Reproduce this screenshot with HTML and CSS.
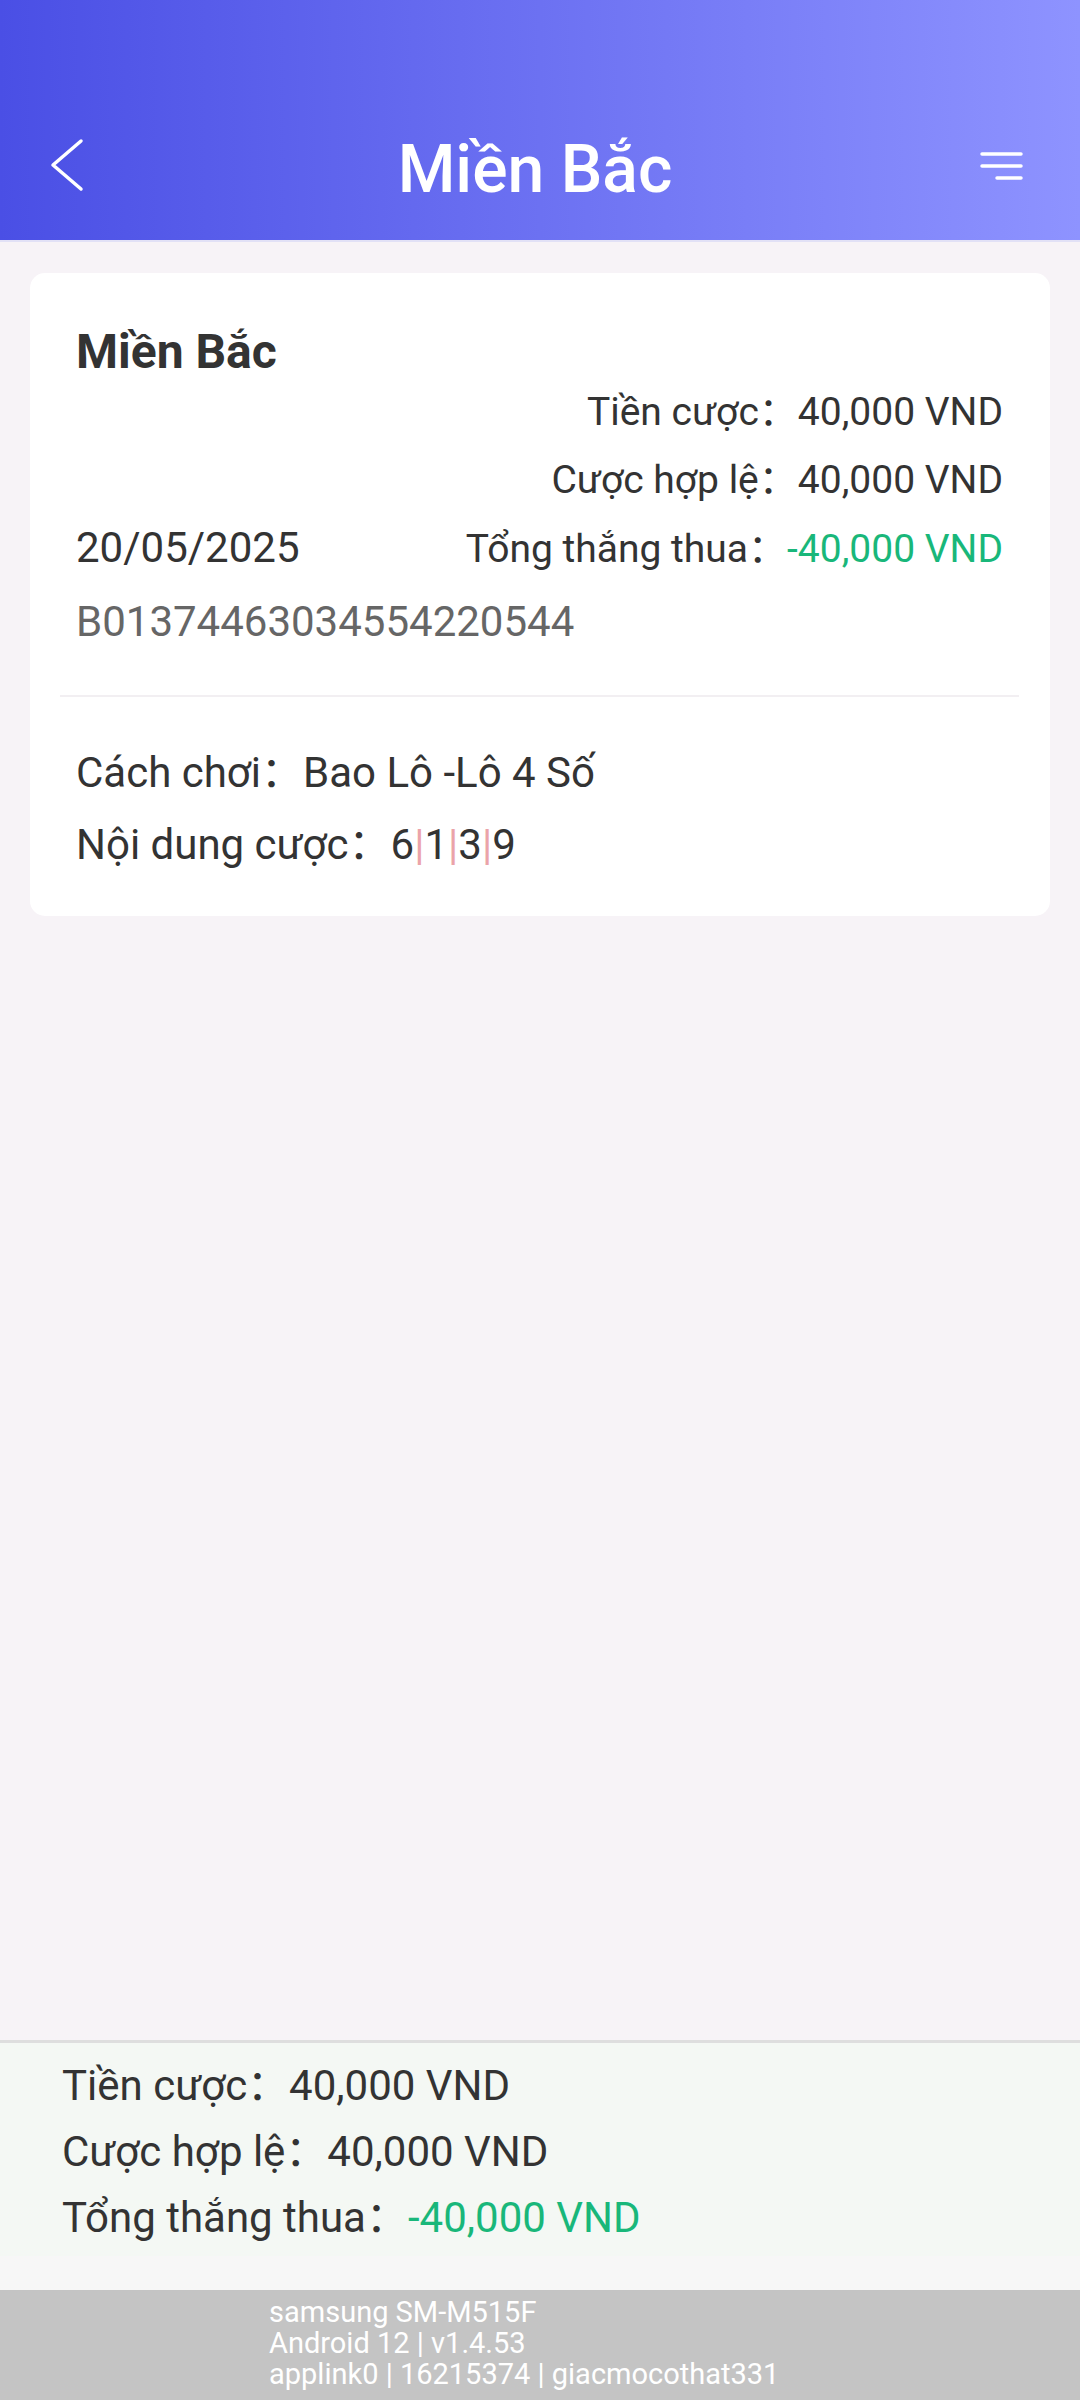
FILE: index.html
```html
<!DOCTYPE html>
<html lang="vi">
<head>
    <meta charset="UTF-8">
    <meta name="viewport" content="width=device-width, initial-scale=1.0">
    <title>Miền Bắc</title>
    <link rel="stylesheet" href="styles.css">
</head>
<body>
    <div class="page">
        <header class="topbar">
            <div class="topbar-row">
                <svg class="icon-back" width="60" height="60" viewBox="0 0 60 60">
                    <polyline points="51,6 23,30 51,54" fill="none" stroke="#fff" stroke-width="3.5" stroke-linecap="round" stroke-linejoin="round"/>
                </svg>
                <h1 class="title">Miền Bắc</h1>
                <svg class="icon-menu" width="80" height="60" viewBox="0 0 80 60">
                    <g stroke="#fff" stroke-width="3.5" stroke-linecap="round">
                        <line x1="22" y1="19" x2="61" y2="19"/>
                        <line x1="22" y1="31" x2="61" y2="31"/>
                        <line x1="37" y1="43" x2="61" y2="43"/>
                    </g>
                </svg>
            </div>
        </header>

        <main class="content">
            <div class="card">
                <div class="card-title">Miền Bắc</div>
                <div class="row right">
                    <span>Tiền cược：</span><span>40,000 VND</span>
                </div>
                <div class="row right">
                    <span>Cược hợp lệ：</span><span>40,000 VND</span>
                </div>
                <div class="row split">
                    <span class="date">20/05/2025</span>
                    <span>Tổng thắng thua：<span class="loss">-40,000 VND</span></span>
                </div>
                <div class="order-no">B01374463034554220544</div>
                <div class="divider"></div>
                <div class="line">Cách chơi：Bao Lô -Lô 4 Số</div>
                <div class="line">Nội dung cược：6<span class="pipe">|</span>1<span class="pipe">|</span>3<span class="pipe">|</span>9</div>
            </div>
        </main>

        <section class="summary">
            <div class="sum-row">Tiền cược：40,000 VND</div>
            <div class="sum-row">Cược hợp lệ：40,000 VND</div>
            <div class="sum-row">Tổng thắng thua：<span class="loss">-40,000 VND</span></div>
        </section>
        <div class="spacer"></div>

        <footer class="device">
            <div>samsung SM-M515F</div>
            <div>Android 12 | v1.4.53</div>
            <div>applink0 | 16215374 | giacmocothat331</div>
        </footer>
    </div>
</body>
</html>
```

FILE: styles.css
```css
* { box-sizing: border-box; }
body { margin: 0; font-family: Roboto, "Noto Sans CJK SC", sans-serif; color: #333; background: #f7f3f7; }
.page { width: 1080px; height: 2400px; display: flex; flex-direction: column; }

.topbar { height: 242px; padding-top: 130px; background: linear-gradient(90deg, #4a4fe5, #8e93ff); border-bottom: 2px solid #e2e1f6; }
.topbar-row { height: 80px; display: grid; grid-template-columns: 1fr auto 1fr; align-items: center; padding: 0 40px 0 30px; }
.icon-back, .icon-menu { margin-bottom: 10px; }
.icon-menu { justify-self: end; }
.title { margin: 0; font-size: 66px; line-height: 80px; font-weight: 500; color: #fff; }

.content { flex: 1; padding: 31px 30px 0; }
.card { background: #fff; border-radius: 15px; padding: 53px 47px 35px 46px; }
.card-title { font-size: 48px; font-weight: 700; line-height: 52px; }
.row { font-size: 39px; line-height: 68px; display: flex; align-items: baseline; }
.row.right { justify-content: flex-end; }
.row.split { justify-content: space-between; }
.date { font-size: 42px; }
.loss { color: #19b77a; }
.order-no { font-size: 42px; line-height: 68px; margin-top: 5px; color: #666; }
.divider { height: 2px; background: #f2eff2; margin: 39px -16px 40px; }
.line { font-size: 42px; line-height: 72px; }
.pipe { color: #eba3a9; }

.summary { border-top: 3px solid #dedede; background: #f4f8f4; padding: 10px 62px 5px; }
.sum-row { font-size: 42px; line-height: 66px; }
.spacer { height: 34px; background: #f7f7f7; }

.device { height: 110px; background: #c4c4c4; color: #fff; font-size: 29px; line-height: 31px; padding: 7px 0 0 269px; }
```
